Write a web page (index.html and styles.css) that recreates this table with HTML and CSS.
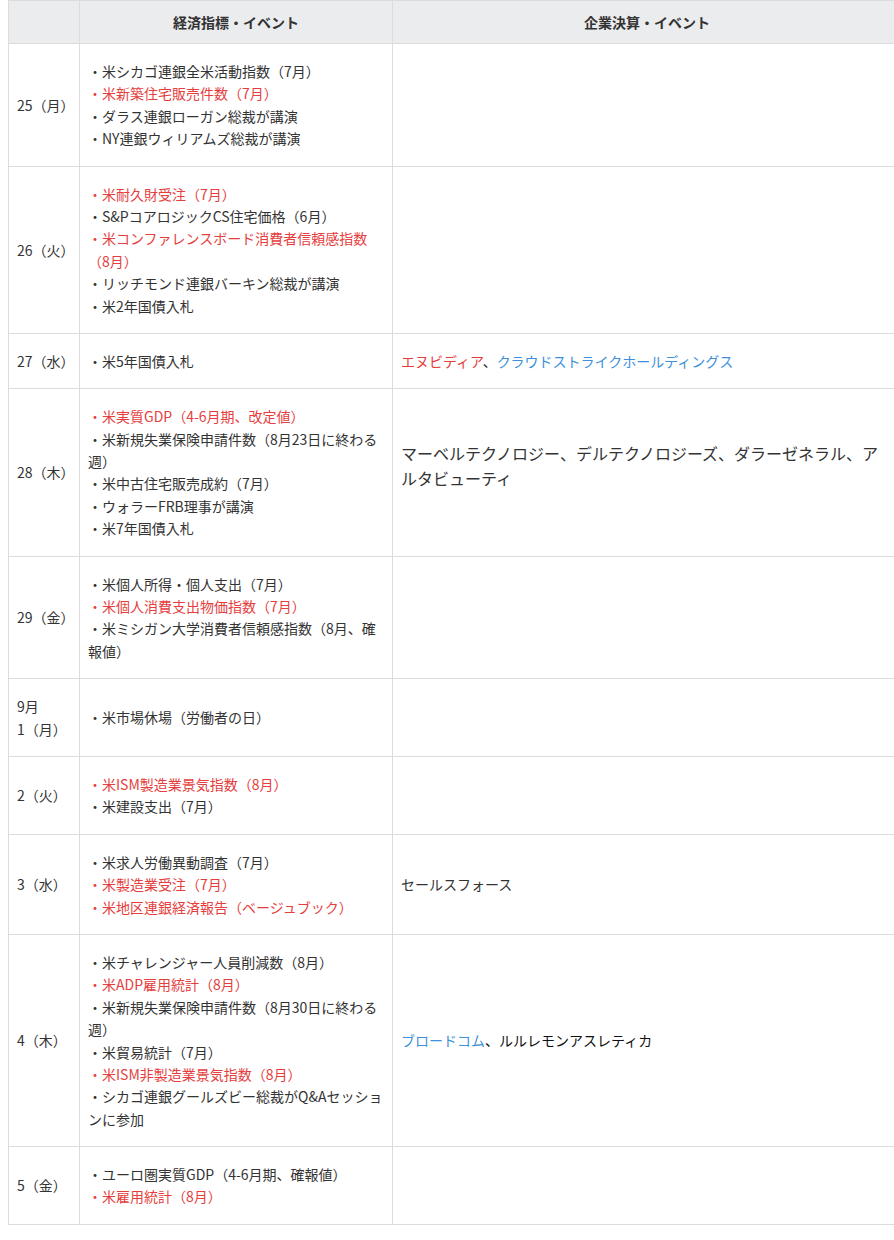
FILE: index.html
```html
<!DOCTYPE html>
<html lang="ja">
<head>
<meta charset="utf-8">
<title>経済指標・企業決算</title>
<link rel="stylesheet" href="styles.css">
</head>
<body>
<table class="sched">
  <colgroup>
    <col class="c-date">
    <col class="c-eco">
    <col class="c-corp">
  </colgroup>
  <thead>
    <tr><th></th><th>経済指標・イベント</th><th>企業決算・イベント</th></tr>
  </thead>
  <tbody>
    <tr>
      <td>25（月）</td>
      <td>・米シカゴ連銀全米活動指数（7月）<br><span class="red">・米新築住宅販売件数（7月）</span><br>・ダラス連銀ローガン総裁が講演<br>・NY連銀ウィリアムズ総裁が講演</td>
      <td></td>
    </tr>
    <tr>
      <td>26（火）</td>
      <td><span class="red">・米耐久財受注（7月）</span><br>・S&amp;PコアロジックCS住宅価格（6月）<br><span class="red">・米コンファレンスボード消費者信頼感指数（8月）</span><br>・リッチモンド連銀バーキン総裁が講演<br>・米2年国債入札</td>
      <td></td>
    </tr>
    <tr>
      <td>27（水）</td>
      <td>・米5年国債入札</td>
      <td><span class="red">エヌビディア</span>、<span class="blue">クラウドストライクホールディングス</span></td>
    </tr>
    <tr>
      <td>28（木）</td>
      <td><span class="red">・米実質GDP（4-6月期、改定値）</span><br>・米新規失業保険申請件数（8月23日に終わる週）<br>・米中古住宅販売成約（7月）<br>・ウォラーFRB理事が講演<br>・米7年国債入札</td>
      <td class="big"><p class="para">マーベルテクノロジー、デルテクノロジーズ、ダラーゼネラル、アルタビューティ</p></td>
    </tr>
    <tr>
      <td>29（金）</td>
      <td>・米個人所得・個人支出（7月）<br><span class="red">・米個人消費支出物価指数（7月）</span><br>・米ミシガン大学消費者信頼感指数（8月、確報値）</td>
      <td></td>
    </tr>
    <tr>
      <td>9月<br>1（月）</td>
      <td>・米市場休場（労働者の日）</td>
      <td></td>
    </tr>
    <tr>
      <td>2（火）</td>
      <td><span class="red">・米ISM製造業景気指数（8月）</span><br>・米建設支出（7月）</td>
      <td></td>
    </tr>
    <tr>
      <td>3（水）</td>
      <td>・米求人労働異動調査（7月）<br><span class="red">・米製造業受注（7月）</span><br><span class="red">・米地区連銀経済報告（ベージュブック）</span></td>
      <td>セールスフォース</td>
    </tr>
    <tr>
      <td>4（木）</td>
      <td>・米チャレンジャー人員削減数（8月）<br><span class="red">・米ADP雇用統計（8月）</span><br>・米新規失業保険申請件数（8月30日に終わる週）<br>・米貿易統計（7月）<br><span class="red">・米ISM非製造業景気指数（8月）</span><br>・シカゴ連銀グールズビー総裁がQ&amp;Aセッションに参加</td>
      <td><span class="blue">ブロードコム</span><span class="dark">、ルルレモンアスレティカ</span></td>
    </tr>
    <tr>
      <td>5（金）</td>
      <td>・ユーロ圏実質GDP（4-6月期、確報値）<br><span class="red">・米雇用統計（8月）</span></td>
      <td></td>
    </tr>
  </tbody>
</table>
</body>
</html>
```
FILE: styles.css
```css
html, body {
  margin: 0;
  padding: 0;
  background: #fff;
  overflow: hidden;
}
body {
  padding-left: 8px;
  font-family: "Noto Sans CJK JP", "Noto Sans", sans-serif;
  font-size: 14px;
  line-height: 1.6;
  color: #333;
}
.sched {
  border-collapse: collapse;
  width: 894px;
  table-layout: fixed;
}
.c-date { width: 71px; }
.c-eco { width: 313px; }
.sched th,
.sched td {
  border: 1px solid #dcdcdc;
  vertical-align: middle;
  text-align: left;
  padding: 16px 8px;
}
.sched th {
  background: #ebecee;
  font-weight: bold;
  text-align: center;
  line-height: 22px;
  padding: 10px 8px;
}
.sched td.big {
  font-size: 16px;
}
.para {
  margin: 0 0 12px;
}
.red { color: #e53e3e; }
.blue { color: #3d90db; }
.dark { color: #111; }
```
